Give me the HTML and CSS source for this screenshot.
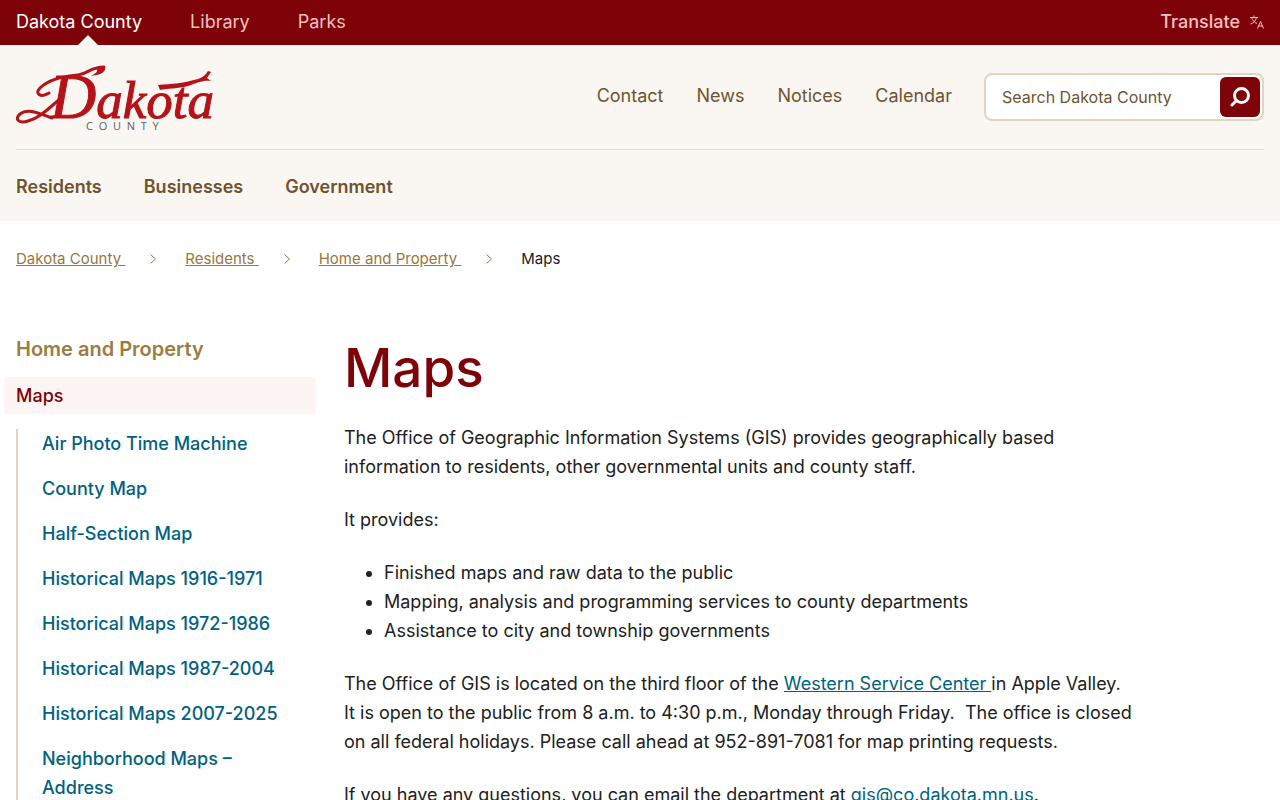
FILE: index.html
```html
<!DOCTYPE html>
<html lang="en">
<head>
<meta charset="utf-8">
<meta name="viewport" content="width=device-width, initial-scale=1">
<title>Maps | Dakota County</title>
<link rel="stylesheet" href="styles.css">
</head>
<body>
<div class="topbar">
  <nav class="sites" aria-label="Sites">
    <a class="site current" href="#">Dakota County</a>
    <a class="site" href="#">Library</a>
    <a class="site" href="#">Parks</a>
  </nav>
  <button class="translate" type="button">Translate
    <svg class="translate-icon" viewBox="0 0 14 14" aria-hidden="true"><path d="M0 2.500h8M4 .5v2M1.500 2.500C2.500 5.500 4.500 7.500 7 8.500M6.500 2.500C5.500 6 3.500 8 .5 9M7.500 13.500L10.500 6.500 13.500 13.500M8.500 11h4"/></svg>
  </button>
</div>
<header class="header">
  <div class="masthead">
    <a class="logo" href="#" aria-label="Dakota County home">
      <svg class="logo-art" viewBox="0 0 196 68" aria-hidden="true">
        <path class="swash" d="M36 55C22 50 12 45 4 51C-2 56 3 61 12 58C24 55 34 44 44 36"/>
        <path class="swash" d="M33 30C25 35 18 31 24 25C34 15 50 13 62 12C72 11 74 4 88 4"/>
        <path class="swash-fill" d="M80 6C84 2 90 3 89 7C87 11 81 12 75 13C80 10 83 8 80 6Z"/>
        <path class="swash-fill" d="M142 22C156 21 168 20 182 16C188 14 190 11 192 8L195 9L191 15L195 18C187 17 181 20 172 23C162 26 151 25 144 27Z"/>
        <text class="script" x="34" y="55"><tspan class="script-initial">D</tspan>akota</text>
        <text class="county" x="70" y="67">C&nbsp;&nbsp;O&nbsp;&nbsp;U&nbsp;&nbsp;N&nbsp;&nbsp;T&nbsp;&nbsp;Y</text>
      </svg>
    </a>
    <nav class="utility" aria-label="Utility">
      <a href="#">Contact</a>
      <a href="#">News</a>
      <a href="#">Notices</a>
      <a href="#">Calendar</a>
    </nav>
    <form class="search" role="search">
      <input class="search-field" type="text" placeholder="Search Dakota County" aria-label="Search Dakota County">
      <button class="search-button" type="button" aria-label="Search">
        <svg class="search-icon" viewBox="0 0 20 20" aria-hidden="true"><circle cx="11.500" cy="8.500" r="7"/><path d="M6.500 13.500L2 18"/></svg>
      </button>
    </form>
  </div>
  <nav class="primary" aria-label="Primary">
    <a href="#">Residents</a>
    <a href="#">Businesses</a>
    <a href="#">Government</a>
  </nav>
</header>
<nav class="breadcrumb" aria-label="Breadcrumb">
  <a href="#">Dakota County&nbsp;</a>
  <svg class="chevron" viewBox="0 0 6 10" aria-hidden="true"><path d="M.5.5L5.500 5 .5 9.500"/></svg>
  <a href="#">Residents&nbsp;</a>
  <svg class="chevron" viewBox="0 0 6 10" aria-hidden="true"><path d="M.5.5L5.500 5 .5 9.500"/></svg>
  <a href="#">Home and Property&nbsp;</a>
  <svg class="chevron" viewBox="0 0 6 10" aria-hidden="true"><path d="M.5.5L5.500 5 .5 9.500"/></svg>
  <span aria-current="page">Maps</span>
</nav>
<div class="layout">
  <aside class="sidebar">
    <a class="section-title" href="#">Home and Property</a>
    <a class="section-current" href="#">Maps</a>
    <ul class="section-links">
      <li><a href="#">Air Photo Time Machine</a></li>
      <li><a href="#">County Map</a></li>
      <li><a href="#">Half-Section Map</a></li>
      <li><a href="#">Historical Maps 1916-1971</a></li>
      <li><a href="#">Historical Maps 1972-1986</a></li>
      <li><a href="#">Historical Maps 1987-2004</a></li>
      <li><a href="#">Historical Maps 2007-2025</a></li>
      <li><a href="#">Neighborhood Maps – Address</a></li>
    </ul>
  </aside>
  <main class="content">
    <h1>Maps</h1>
    <p>The Office of Geographic Information Systems (GIS) provides geographically based information to residents, other governmental units and county staff.</p>
    <p>It provides:</p>
    <ul>
      <li>Finished maps and raw data to the public</li>
      <li>Mapping, analysis and programming services to county departments</li>
      <li>Assistance to city and township governments</li>
    </ul>
    <p>The Office of GIS is located on the third floor of the <a href="#">Western Service Center </a>in Apple Valley. It is open to the public from 8 a.m. to 4:30 p.m., Monday through Friday.&nbsp; The office is closed on all federal holidays. Please call ahead at 952-891-7081 for map printing requests.</p>
    <p>If you have any questions, you can email the department at <a href="#">gis@co.dakota.mn.us</a>.</p>
  </main>
</div>
</body>
</html>
```
FILE: styles.css
```css
* { box-sizing: border-box; }
html { scrollbar-width: none; }
body {
  margin: 0;
  background: #fff;
  color: #212121;
  font: 400 18px/29px Inter, "Liberation Sans", sans-serif;
}
a { color: inherit; text-decoration: none; }
button, input { font: inherit; }

.topbar {
  display: flex;
  justify-content: space-between;
  padding: 0 16px;
  background: #7d0308;
  color: #f5c0c0;
}
.sites { display: flex; gap: 48px; }
.site { position: relative; padding: 7px 0 9px; }
.site.current { color: #fff; }
.site.current::after {
  content: "";
  position: absolute;
  left: 62px;
  bottom: 0;
  border: 10px solid transparent;
  border-top-width: 0;
  border-bottom-color: #faf6f1;
}
.translate {
  display: flex;
  align-items: center;
  gap: 10px;
  padding: 0 0 2px;
  border: 0;
  background: none;
  color: inherit;
  font-weight: 500;
}
.translate-icon {
  width: 14px;
  height: 14px;
  fill: none;
  stroke: currentColor;
}

.header { padding: 0 16px; background: #faf6f1; }
.masthead {
  display: flex;
  align-items: center;
  height: 105px;
  border-bottom: 1px solid #e5dbcd;
}
.logo { margin-right: auto; }
.logo-art { display: block; width: 196px; height: 68px; overflow: visible; }
.swash { fill: none; stroke: #b4131a; stroke-width: 3; stroke-linecap: round; }
.swash-fill { fill: #b4131a; }
.script {
  fill: #b4131a;
  stroke: #b4131a;
  font: italic 400 53px "Liberation Serif", serif;
}
.script-initial { font-size: 64px; }
.county { fill: #5a6062; font: 400 11px "Open Sans", sans-serif; }
.utility { display: flex; gap: 33px; padding-bottom: 3px; color: #6d5430; }
.search {
  display: flex;
  width: 280px;
  height: 48px;
  margin-left: 32px;
  padding: 2px;
  border: 2px solid #e0d6c0;
  border-radius: 8px;
  background: #fff;
}
.search-field {
  flex: 1;
  min-width: 0;
  padding: 0 14px;
  border: 0;
  outline: 0;
  background: none;
  font-size: 16px;
}
.search-field::placeholder { color: #6d5430; opacity: 1; }
.search-button {
  display: grid;
  place-items: center;
  width: 40px;
  padding: 0;
  border: 0;
  border-radius: 6px;
  background: #7d0308;
}
.search-icon {
  width: 20px;
  height: 20px;
  fill: none;
  stroke: #fff;
  stroke-width: 3;
  stroke-linecap: round;
}
.primary {
  display: flex;
  gap: 42px;
  padding: 22px 0 20px;
  color: #6d5430;
  font-weight: 600;
}

.breadcrumb {
  display: flex;
  align-items: center;
  gap: 25px;
  padding: 23px 16px 24px;
  font-size: 15px;
}
.breadcrumb a { color: #97783d; text-decoration: underline; }
.chevron {
  width: 6px;
  height: 10px;
  margin-right: 4px;
  fill: none;
  stroke: #97783d;
}

.layout {
  display: grid;
  grid-template-columns: 304px minmax(0, 792px);
  gap: 24px;
  padding: 38px 16px 48px;
}
.sidebar { font-weight: 500; }
.section-title {
  display: block;
  margin-bottom: 13px;
  color: #9b7c42;
  font-size: 20px;
  font-weight: 600;
}
.section-current {
  display: block;
  margin: 0 4px 15px -12px;
  padding: 4px 12px;
  border-radius: 4px;
  background: #fdf4f4;
  color: #7d0308;
}
.section-links {
  display: grid;
  gap: 16px;
  margin: 0;
  padding: 0 24px;
  border-left: 2px solid #e0d6c0;
  color: #006280;
  list-style: none;
}
.content h1 {
  margin: 0 0 22px;
  color: #7d0308;
  font-size: 53px;
  font-weight: 500;
  line-height: 66px;
}
.content p, .content ul { margin: 0 0 24px; }
.content a { color: #006280; text-decoration: underline; }
```
